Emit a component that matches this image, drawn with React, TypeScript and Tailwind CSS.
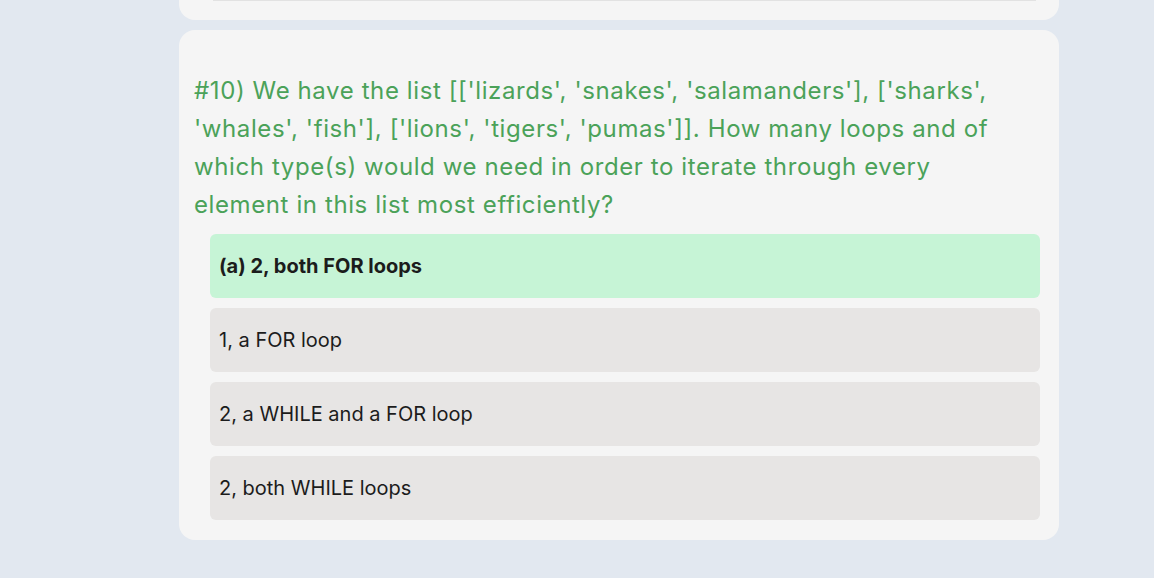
export default function App() {
  const options = [
    { label: "(a) 2, both FOR loops", correct: true },
    { label: "1, a FOR loop", correct: false },
    { label: "2, a WHILE and a FOR loop", correct: false },
    { label: "2, both WHILE loops", correct: false },
  ];

  return (
    <div className="h-[578px] overflow-hidden bg-[#e2e8f0] font-['Inter',sans-serif]">
      <div className="ml-[179px] w-[880px]">
        {/* tail of the previous question card */}
        <div className="h-[20px] rounded-b-2xl bg-[#f5f5f5] pl-[34px] pr-[23px]">
          <div className="h-px bg-[#e2e2e2]" />
        </div>

        {/* question card */}
        <div className="mt-[10px] rounded-2xl bg-[#f5f5f5] pb-[20px] pl-[15px] pr-[19px] pt-[42px]">
          <p className="pr-[30px] text-[24px] leading-[38px] tracking-[0.6px] text-[#4ba259]">
            #10) We have the list [['lizards', 'snakes', 'salamanders'], ['sharks', 'whales', 'fish'], ['lions', 'tigers', 'pumas']]. How many loops and of which type(s) would we need in order to iterate through every element in this list most efficiently?
          </p>
          <div className="ml-4 mt-[10px] flex flex-col gap-[10px]">
            {options.map((o) => (
              <div
                key={o.label}
                className={`flex h-16 items-center rounded-md px-[9px] text-[20px] text-[#1c1c1c] ${
                  o.correct ? "bg-[#c6f4d6] font-bold" : "bg-[#e7e5e4]"
                }`}
              >
                {o.label}
              </div>
            ))}
          </div>
        </div>
      </div>
    </div>
  );
}
